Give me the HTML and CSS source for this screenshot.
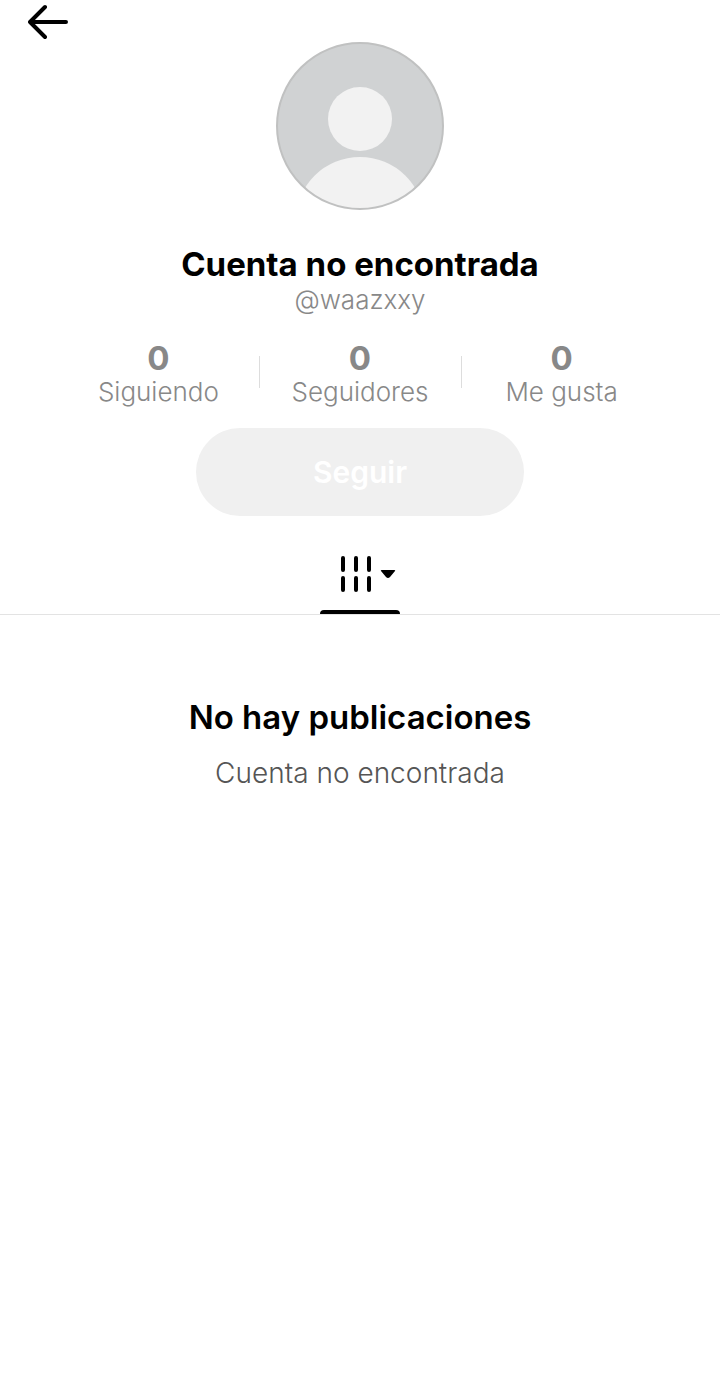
FILE: index.html
```html
<!DOCTYPE html>
<html lang="es">
<head>
  <meta charset="UTF-8" />
  <meta name="viewport" content="width=device-width, initial-scale=1.0" />
  <title>Cuenta no encontrada</title>
  <link rel="stylesheet" href="styles.css">
</head>
<body>
  <header class="top-bar">
    <a class="back" href="#" aria-label="Volver">
      <svg width="40" height="36" viewBox="0 0 40 36" fill="none" stroke="currentColor" stroke-width="4" stroke-linecap="round" stroke-linejoin="round">
        <path d="M17 3 2 18l15 15M2 18h36" />
      </svg>
    </a>
  </header>

  <main>
    <section class="profile">
      <svg class="avatar" viewBox="0 0 168 168" role="img" aria-label="Foto de perfil">
        <clipPath id="avatarClip"><circle cx="84" cy="84" r="83" /></clipPath>
        <g clip-path="url(#avatarClip)">
          <rect width="168" height="168" fill="#d0d2d3" />
          <circle cx="84" cy="77" r="32" fill="#f2f2f2" />
          <ellipse cx="84" cy="178" rx="64" ry="63" fill="#f2f2f2" />
        </g>
        <circle cx="84" cy="84" r="83" fill="none" stroke="#c0c1c1" stroke-width="2" />
      </svg>
      <h1 class="name">Cuenta no encontrada</h1>
      <p class="handle">@waazxxy</p>

      <ul class="stats">
        <li class="stat"><strong>0</strong><span>Siguiendo</span></li>
        <li class="stat"><strong>0</strong><span>Seguidores</span></li>
        <li class="stat"><strong>0</strong><span>Me gusta</span></li>
      </ul>

      <button class="follow" type="button">Seguir</button>
    </section>

    <nav class="tabs">
      <button class="tab" type="button" aria-label="Publicaciones">
        <svg width="56" height="36" viewBox="0 0 56 36">
          <path d="M3 2v12M16 2v12M29 2v12M3 22v12M16 22v12M29 22v12" fill="none" stroke="currentColor" stroke-width="4" stroke-linecap="round" />
          <path d="M42 14h12q2 0 1 1l-5 6q-2 2-4 0l-5-6q-1-1 1-1z" fill="currentColor" />
        </svg>
      </button>
    </nav>

    <section class="empty">
      <h2>No hay publicaciones</h2>
      <p>Cuenta no encontrada</p>
    </section>
  </main>
</body>
</html>
```
FILE: styles.css
```css
* {
  box-sizing: border-box;
  margin: 0;
  padding: 0;
}
body {
  background: #fff;
  color: #000;
  font-family: Inter, Roboto, sans-serif;
}
.top-bar {
  display: flex;
  padding: 4px 28px 0;
}
.back {
  color: #000;
}
.back svg {
  display: block;
}
.profile {
  display: flex;
  flex-direction: column;
  align-items: center;
  padding-top: 2px;
}
.avatar {
  width: 168px;
  height: 168px;
  margin-bottom: 32px;
}
.name {
  font-size: 33px;
  font-weight: 700;
  line-height: 44px;
}
.handle {
  color: #888;
  font-size: 26px;
  font-weight: 300;
  line-height: 28px;
}
.stats {
  display: grid;
  grid-template-columns: repeat(3, 1fr);
  width: 84%;
  margin: 26px 0 20px;
  list-style: none;
  color: #888;
}
.stat {
  display: flex;
  flex-direction: column;
  align-items: center;
  font-size: 26px;
  font-weight: 300;
  line-height: 32px;
  position: relative;
}
.stat strong {
  font-size: 33px;
  line-height: 36px;
  font-weight: 700;
}
.stat + .stat::before {
  content: "";
  position: absolute;
  left: 0;
  top: 16px;
  width: 1px;
  height: 32px;
  background: #ddd;
}
.follow {
  width: 328px;
  max-width: 100%;
  padding: 24px;
  background: #f0f0f0;
  color: #fff;
  border: none;
  border-radius: 44px;
  font: inherit;
  font-size: 30px;
  font-weight: 600;
  line-height: 40px;
}
.tabs {
  display: flex;
  justify-content: center;
  margin-top: 40px;
  border-bottom: 1px solid #e3e3e3;
}
.tab {
  display: flex;
  flex-direction: column;
  align-items: center;
  width: 80px;
  padding-left: 16px;
  background: none;
  border: none;
  color: #000;
}
.tab::after {
  content: "";
  align-self: stretch;
  height: 4px;
  margin: 18px 0 0 -16px;
  border-radius: 4px 4px 0 0;
  background: #000;
}
.empty {
  padding: 80px 32px;
  text-align: center;
}
.empty h2 {
  font-size: 33px;
  font-weight: 600;
  line-height: 44px;
}
.empty p {
  margin-top: 16px;
  color: #555;
  font-size: 28px;
  font-weight: 300;
  line-height: 36px;
}
```
